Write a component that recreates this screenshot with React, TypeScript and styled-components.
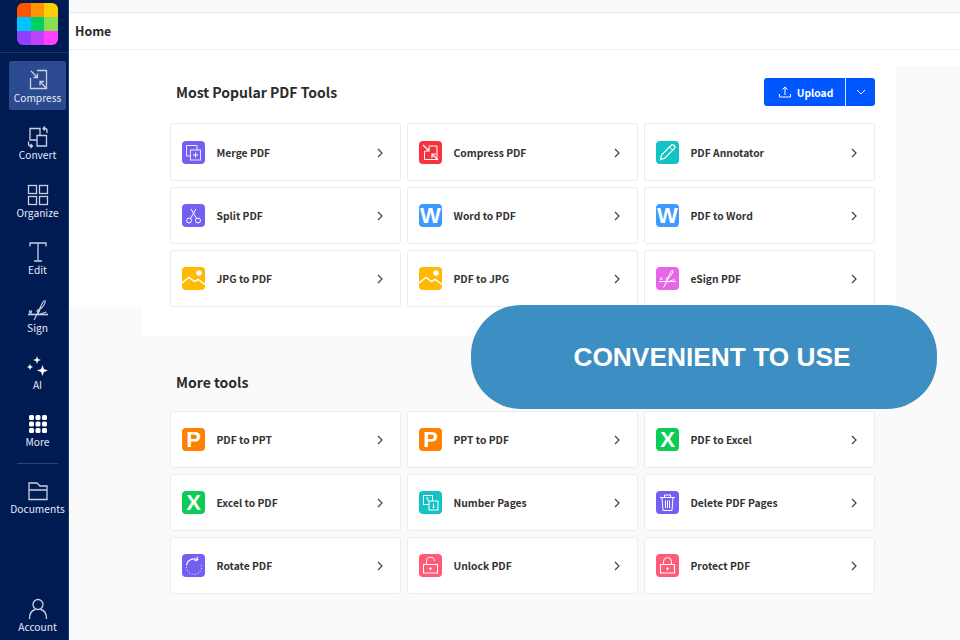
import React from "react";
import styled, { createGlobalStyle } from "styled-components";

const Global = createGlobalStyle`
  html, body { margin: 0; padding: 0; background: #fafafa; }
  * { box-sizing: border-box; }
  body { font-family: "Noto Sans CJK SC", "Noto Sans", sans-serif; overflow: hidden; }
`;

const Page = styled.div`
  display: flex;
  width: 960px;
  height: 640px;
  position: relative;
  overflow: hidden;
`;

const Sidebar = styled.aside`
  width: 69px;
  height: 640px;
  flex: none;
  background: #001a52;
  border-right: 1px solid #1d3a75;
  display: flex;
  flex-direction: column;
`;

const LogoBar = styled.div`
  height: 53px;
  padding: 3px 0 0 17px;
  border-bottom: 1px solid #1f3768;
  flex: none;
`;

const Logo = styled.div`
  width: 41px;
  height: 42px;
  border-radius: 6px;
  overflow: hidden;
  display: grid;
  grid-template-columns: repeat(3, 1fr);
  grid-template-rows: repeat(3, 1fr);
`;

const LogoCell = styled.span<{ $c: string }>`
  background: ${(p) => p.$c};
`;

const Nav = styled.nav`
  display: flex;
  flex-direction: column;
  padding: 8px 3px 0 9px;
  gap: 8.4px;
`;

const NavItem = styled.div<{ $active?: boolean }>`
  width: 57px;
  height: 49px;
  border-radius: 2px;
  background: ${(p) => (p.$active ? "#2b4a90" : "transparent")};
  display: flex;
  flex-direction: column;
  align-items: center;
  padding-top: 7px;
  color: #e6ebf5;
  font-size: 10.2px;
  line-height: 16px;
  white-space: nowrap;
  svg { display: block; flex: none; }
`;

const NavLabel = styled.span`
  margin-top: -2px;
`;

const NavRule = styled.hr`
  width: 41px;
  height: 1px;
  border: 0;
  margin: 0 0 0 8px;
  background: #2c4577;
`;

const AccountSlot = styled.div`
  margin-top: auto;
  padding: 0 3px 1px 9px;
`;

const Main = styled.main`
  flex: 1;
  min-width: 0;
  display: flex;
  flex-direction: column;
`;

const TopStrip = styled.div`
  height: 13px;
  flex: none;
  background: #fafafa;
  border-bottom: 1px solid #e8e8e8;
`;

const Header = styled.header`
  height: 37px;
  flex: none;
  background: #fff;
  border-bottom: 1px solid #f0f0f0;
  padding: 0 0 1px 6px;
  display: flex;
  align-items: center;
  font-size: 12.4px;
  font-weight: 700;
  color: #2b2b2b;
`;

const Content = styled.div`
  flex: 1;
  background:
    linear-gradient(#fff, #fff) 0 0 / 73px 257px no-repeat,
    linear-gradient(#fff, #fff) 0 0 / 100% 16px no-repeat,
    #fafafa;
`;

const PopularPanel = styled.section`
  margin-left: 73px;
  width: 754px;
  height: 286px;
  background: #fff;
  padding: 28px 21px 0 28px;
`;

const MorePanel = styled.section`
  margin-left: 73px;
  width: 754px;
  padding: 32px 21px 0 28px;
`;

const SectionHead = styled.div<{ $gap: number }>`
  height: 28px;
  display: flex;
  align-items: center;
  justify-content: space-between;
  margin-bottom: ${(p) => p.$gap}px;
`;

const Title = styled.h2`
  margin: -1px 0 0 6px;
  font-size: 14px;
  font-weight: 700;
  color: #2b2b2b;
`;

const UploadGroup = styled.div`
  width: 111px;
  height: 28px;
  display: flex;
  background: #0057ff;
  border-radius: 3px;
  color: #fff;
`;

const UploadMain = styled.div`
  width: 82px;
  display: flex;
  align-items: center;
  justify-content: center;
  gap: 5px;
  padding-left: 2px;
  font-size: 10.3px;
  font-weight: 700;
  border-right: 1px solid #cfe0ff;
`;

const UploadCaret = styled.div`
  flex: 1;
  display: flex;
  align-items: center;
  justify-content: center;
`;

const Grid = styled.div`
  display: grid;
  grid-template-columns: repeat(3, 231px);
  grid-auto-rows: 57.33px;
  gap: 6px;
`;

const Card = styled.div`
  background: #fff;
  border: 1px solid #ececec;
  border-radius: 3px;
  display: flex;
  align-items: center;
  padding: 0 15px 0 11px;
`;

const Badge = styled.span<{ $c: string }>`
  width: 23px;
  height: 23px;
  flex: none;
  border-radius: 4px;
  background: ${(p) => p.$c};
  color: #fff;
  display: flex;
  align-items: center;
  justify-content: center;
  overflow: hidden;
  font-family: "Liberation Sans", Arial, sans-serif;
  font-weight: 700;
  font-size: 22px;
  line-height: 23px;
  svg { display: block; }
`;

const CardLabel = styled.span`
  margin-left: 11.5px;
  flex: 1;
  font-size: 10.3px;
  font-weight: 700;
  color: #333;
  white-space: nowrap;
`;

const ChevronSvg = styled.svg`
  flex: none;
  margin-top: 1px;
`;

const Pill = styled.div`
  position: absolute;
  left: 471px;
  top: 305px;
  width: 466px;
  height: 104px;
  border-radius: 50px;
  background: #3d8ec3;
  color: #fff;
  display: flex;
  align-items: center;
  justify-content: center;
  padding-left: 16px;
  font-family: "Liberation Sans", Arial, sans-serif;
  font-weight: 700;
  font-size: 26.3px;
`;

const navStroke = { fill: "none", stroke: "#c9d0e0", strokeWidth: 1.3 } as const;

const Nv: React.FC<{ children: React.ReactNode }> = ({ children }) => (
  <svg width="24" height="24" viewBox="0 0 24 24" {...navStroke}>{children}</svg>
);

const navIcons: Record<string, React.ReactNode> = {
  Compress: (
    <Nv>
      <path d="M11 2.500h9.500v18H4.500V10" />
      <path d="M5 3l6.500 6.500M11.500 5.500v4h-4M20 20l-6-6.500M14 17.500v-4h4" />
    </Nv>
  ),
  Convert: (
    <Nv>
      <path d="M11 15H4V3.500h10V10" />
      <path d="M11 10.500h9.500V21H11z" />
      <path d="M21 8V5.500C21 4 20 3.500 19 3.500h-1.500M19 1.500l-2 2 2 2M2.500 16.500V19c0 1.500 1 2 2 2H6M4.500 19l2 2-2 2" />
    </Nv>
  ),
  Organize: (
    <Nv>
      <rect x="2.500" y="2.500" width="8" height="8" />
      <rect x="13.500" y="2.500" width="8" height="8" />
      <rect x="2.500" y="13.500" width="8" height="8" />
      <rect x="13.500" y="13.500" width="8" height="8" />
    </Nv>
  ),
  Edit: (
    <Nv>
      <path d="M4 6.500V3h16v3.500M12 3v18M8 21h8" />
    </Nv>
  ),
  Sign: (
    <Nv>
      <path d="M2 16.500h20" strokeWidth="1.600" />
      <path d="M3 12.500l3 3M6 12.500l-3 3M8 22c3-5 6-13 9-18 1.200-2 3-1.500 2 .5-1 3.500-5 7-8.500 9M11 12c2.500-.5 3.500 0 2 2s-1.500 3 .5 2.500 4-2 7-2.500" strokeWidth="1.100" />
    </Nv>
  ),
  AI: (
    <svg width="24" height="24" viewBox="0 0 24 24" fill="#fff">
      <path d="M11 1l1 3 3 1-3 1-1 3-1-3-3-1 3-1zM4 9l.9 2.100L7 12l-2.100.9L4 15l-.9-2.100L1 12l2.100-.9zM16.500 10l1.400 4.100 4.100 1.400-4.100 1.400-1.400 4.100-1.400-4.100-4.100-1.400 4.100-1.400z" />
    </svg>
  ),
  More: (
    <svg width="24" height="24" viewBox="0 0 24 24" fill="#fff">
      {[3, 9.500, 16].map((y) =>
        [3, 9.500, 16].map((x) => <rect key={`${x}-${y}`} x={x} y={y} width="5" height="5" rx="1.500" />)
      )}
    </svg>
  ),
  Documents: (
    <Nv>
      <path d="M3 20.500V4h8l3 3h7v13.500zM3 11h18" />
    </Nv>
  ),
  Account: (
    <Nv>
      <circle cx="12" cy="7.500" r="5" />
      <path d="M3.500 22c0-6 3-9 6-9.500M20.500 22c0-6-3-9-6-9.500" />
    </Nv>
  ),
};

const In: React.FC<{ children: React.ReactNode }> = ({ children }) => (
  <svg width="23" height="23" viewBox="0 0 23 23" fill="none" stroke="#fff" strokeWidth="1">{children}</svg>
);

const glyphs = {
  merge: (
    <In>
      <path d="M9 15H4.500V4.500H15V9" strokeOpacity=".85" />
      <rect x="8.500" y="9" width="10" height="10" strokeOpacity=".85" />
      <path d="M13.500 11.500v5M11 14h5" />
    </In>
  ),
  compress: (
    <In>
      <path d="M9.500 5H18v13.500H5.500V10" />
      <path d="M4 4l6 6M10 6v4H6M19 19l-6-6M13 17v-4h4" strokeWidth="1.200" />
    </In>
  ),
  pen: (
    <In>
      <path d="M4.500 18.500l1-4.500L15 4.500c1-1 2.200-1 3.200 0s1 2.200 0 3.200L8.700 17.200z" strokeWidth="1.200" />
      <path d="M13.500 6l3.500 3.500" />
    </In>
  ),
  scissors: (
    <In>
      <circle cx="7" cy="16.500" r="2.500" />
      <circle cx="16" cy="16.500" r="2.500" />
      <path d="M8.500 14.500L14 5M14.500 14.500L9 5" />
    </In>
  ),
  image: (
    <svg width="23" height="23" viewBox="0 0 23 23">
      <circle cx="17" cy="6" r="2.800" fill="#fff" />
      <path d="M0 16l7-5.500 5.500 4 3.500-2 7 5" fill="none" stroke="#fff" strokeWidth="1.500" />
    </svg>
  ),
  sign: (
    <In>
      <path d="M3 14.500h17" />
      <path d="M4 10.500l2.500 2.500M6.500 10.500L4 13M7.500 20.500c2.500-4 5-11 7.500-16 1-1.500 2.500-1.500 1.800.5-1 3-4 6.500-7.300 8M10 11c2-.5 3 0 1.500 1.800s-.8 2.700 1 2 3-1.800 6-2" />
    </In>
  ),
  pages: (
    <In>
      <rect x="4.500" y="4.500" width="9" height="9" />
      <rect x="10" y="10" width="9" height="9" fill="#12c2c4" />
      <path d="M7 7h2v3M14.500 12.500v4M13.500 16.500h2" />
    </In>
  ),
  trash: (
    <In>
      <path d="M4 6.500h15M8.500 6V4h6v2M6 7l1 12.500h9L17 7M9.500 9.500v7.500M11.500 9.500v7.500M13.500 9.500v7.500" />
    </In>
  ),
  rotate: (
    <In>
      <path d="M15.500 5.800A7.500 7.500 0 0 0 4.500 11.500" strokeWidth="1.100" />
      <path d="M4.600 13a7.500 7.500 0 1 0 14.200-3.500" strokeDasharray="1.200 1.800" />
      <path d="M15 2.500l1 3.500-3.500.8" />
    </In>
  ),
  unlock: (
    <In>
      <rect x="4.500" y="10.500" width="14" height="8.500" />
      <path d="M7.500 10.500V7.500a4 4 0 0 1 8-.5" />
      <circle cx="11.500" cy="14.500" r=".8" fill="#fff" />
      <path d="M11.500 14.500v2" />
    </In>
  ),
  lock: (
    <In>
      <rect x="4.500" y="10.500" width="14" height="8.500" />
      <path d="M7.500 10.500V7.500a4 4 0 0 1 8 0v3" />
      <circle cx="11.500" cy="14.500" r=".8" fill="#fff" />
      <path d="M11.500 14.500v2" />
    </In>
  ),
};

const P = "#7360f2", Y = "#ffb900", B = "#3d9bff", O = "#ff7f00", G = "#0ccc55", R = "#ff5a76", T = "#12c2c4";

type Tool = { label: string; color: string; glyph: React.ReactNode };

const popular: Tool[] = [
  { label: "Merge PDF", color: P, glyph: glyphs.merge },
  { label: "Compress PDF", color: "#f5333f", glyph: glyphs.compress },
  { label: "PDF Annotator", color: T, glyph: glyphs.pen },
  { label: "Split PDF", color: P, glyph: glyphs.scissors },
  { label: "Word to PDF", color: B, glyph: "W" },
  { label: "PDF to Word", color: B, glyph: "W" },
  { label: "JPG to PDF", color: Y, glyph: glyphs.image },
  { label: "PDF to JPG", color: Y, glyph: glyphs.image },
  { label: "eSign PDF", color: "#e667e6", glyph: glyphs.sign },
];

const more: Tool[] = [
  { label: "PDF to PPT", color: O, glyph: "P" },
  { label: "PPT to PDF", color: O, glyph: "P" },
  { label: "PDF to Excel", color: G, glyph: "X" },
  { label: "Excel to PDF", color: G, glyph: "X" },
  { label: "Number Pages", color: T, glyph: glyphs.pages },
  { label: "Delete PDF Pages", color: P, glyph: glyphs.trash },
  { label: "Rotate PDF", color: P, glyph: glyphs.rotate },
  { label: "Unlock PDF", color: R, glyph: glyphs.unlock },
  { label: "Protect PDF", color: R, glyph: glyphs.lock },
];

const logoColors = ["#ff5500", "#ff9500", "#ffd000", "#00c4ff", "#00d060", "#88e050", "#9040ff", "#c040ff", "#ff40ff"];

const Chevron = () => (
  <ChevronSvg width="10" height="10" viewBox="0 0 10 10" fill="none" stroke="#444" strokeWidth="1.200">
    <path d="M3 1l4 4-4 4" />
  </ChevronSvg>
);

const ToolGrid: React.FC<{ tools: Tool[] }> = ({ tools }) => (
  <Grid>
    {tools.map((t) => (
      <Card key={t.label}>
        <Badge $c={t.color}>{t.glyph}</Badge>
        <CardLabel>{t.label}</CardLabel>
        <Chevron />
      </Card>
    ))}
  </Grid>
);

const navTop = ["Compress", "Convert", "Organize", "Edit", "Sign", "AI", "More"];

export default function App() {
  return (
    <Page>
      <Global />
      <Sidebar>
        <LogoBar>
          <Logo>
            {logoColors.map((c) => (
              <LogoCell key={c} $c={c} />
            ))}
          </Logo>
        </LogoBar>
        <Nav>
          {navTop.map((n) => (
            <NavItem key={n} $active={n === "Compress"}>
              {navIcons[n]}
              <NavLabel>{n}</NavLabel>
            </NavItem>
          ))}
          <NavRule />
          <NavItem>
            {navIcons.Documents}
            <NavLabel>Documents</NavLabel>
          </NavItem>
        </Nav>
        <AccountSlot>
          <NavItem>
            {navIcons.Account}
            <NavLabel>Account</NavLabel>
          </NavItem>
        </AccountSlot>
      </Sidebar>
      <Main>
        <TopStrip />
        <Header>Home</Header>
        <Content>
          <PopularPanel>
            <SectionHead $gap={17.4}>
              <Title>Most Popular PDF Tools</Title>
              <UploadGroup>
                <UploadMain>
                  <svg width="14" height="14" viewBox="0 0 14 14" fill="none" stroke="#fff" strokeWidth="1">
                    <path d="M7 10V2M4.500 4.500L7 2l2.500 2.500M1.500 9v3h11V9" />
                  </svg>
                  Upload
                </UploadMain>
                <UploadCaret>
                  <svg width="10" height="10" viewBox="0 0 10 10" fill="none" stroke="#fff" strokeWidth="1">
                    <path d="M1 3l4 4 4-4" />
                  </svg>
                </UploadCaret>
              </UploadGroup>
            </SectionHead>
            <ToolGrid tools={popular} />
          </PopularPanel>
          <MorePanel>
            <SectionHead $gap={14.5}>
              <Title>More tools</Title>
            </SectionHead>
            <ToolGrid tools={more} />
          </MorePanel>
        </Content>
      </Main>
      <Pill>CONVENIENT TO USE</Pill>
    </Page>
  );
}
